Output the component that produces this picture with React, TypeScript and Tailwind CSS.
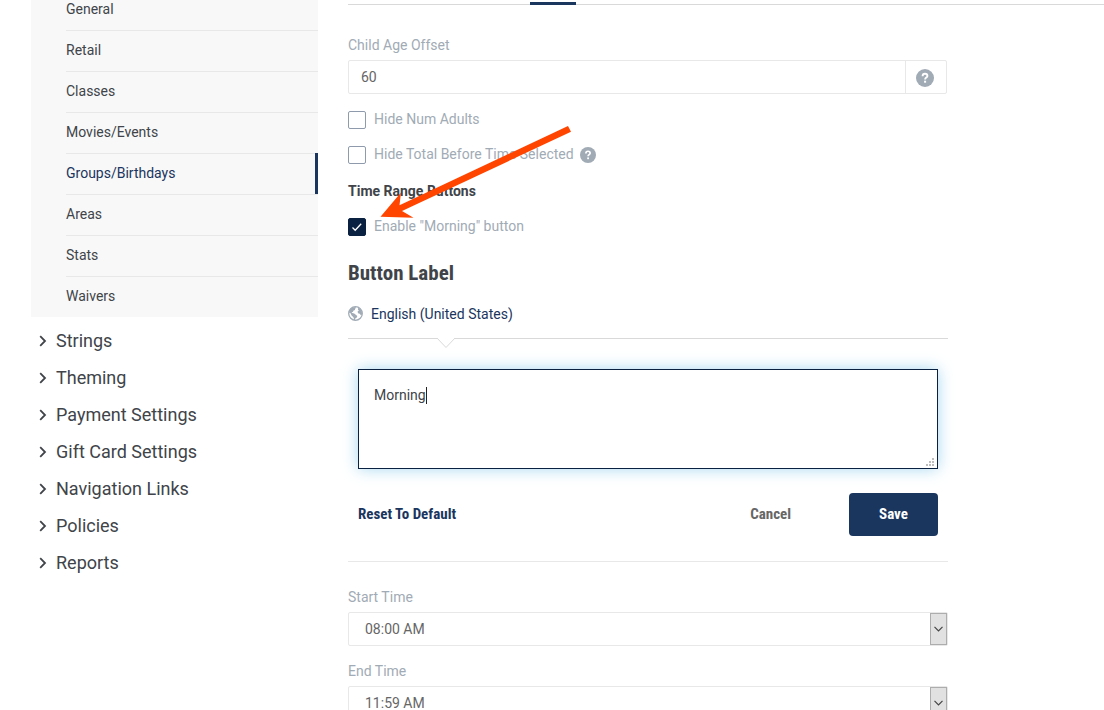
import { useState } from 'react';
import type { ReactNode } from 'react';

const subLinks = [
  'General',
  'Retail',
  'Classes',
  'Movies/Events',
  'Groups/Birthdays',
  'Areas',
  'Stats',
  'Waivers',
];

const sections = [
  'Strings',
  'Theming',
  'Payment Settings',
  'Gift Card Settings',
  'Navigation Links',
  'Policies',
  'Reports',
];

function HelpIcon({ className }: { className: string }) {
  return (
    <svg viewBox="0 0 18 18" className={className} aria-hidden="true">
      <circle cx="9" cy="9" r="9" fill="#a1abb5" />
      <path
        d="M6.6 7.2C6.6 5.6 7.6 4.8 9 4.8s2.4.8 2.4 2.1c0 1.7-2.3 1.7-2.3 3.5"
        fill="none"
        stroke="#fff"
        strokeWidth="1.9"
      />
      <rect x="8.1" y="11.7" width="2" height="2" fill="#fff" />
    </svg>
  );
}

function GlobeIcon() {
  return (
    <svg viewBox="0 0 15 15" className="size-[15px] shrink-0" aria-hidden="true">
      <circle cx="7.5" cy="7.5" r="6.8" fill="#fff" stroke="#a1abb5" strokeWidth="1.3" />
      <path
        d="M1.6 4 4.2 1.4 7.4 1l.8 1-1.3.8.2 1.3-1.5.3-.7 1.5-1.3.2.7 1 1.9.3 3.1 2.5-.5 1.5-1.4.9-.3 2-1-.4-.5-2.5L3.4 9.2 2.8 7.4 1 6.4z"
        fill="#a1abb5"
      />
      <path d="m10 1.8 2.4 1.5 1.5 2.8.1 2.3-1.1.8-1.2-1.4-1.7-.5-.4-1.7 1.3-1-.9-.9z" fill="#a1abb5" />
    </svg>
  );
}

interface CheckFieldProps {
  id: string;
  label: string;
  defaultChecked?: boolean;
  children?: ReactNode;
}

function CheckField({ id, label, defaultChecked, children }: CheckFieldProps) {
  return (
    <div className="flex h-[18px] items-center">
      <span className="relative size-[18px] shrink-0">
        <input
          id={id}
          type="checkbox"
          defaultChecked={defaultChecked}
          className="peer block size-[18px] appearance-none rounded-xs border border-[#8f9bad] bg-white checked:border-[#0b2142] checked:bg-[#0b2142]"
        />
        <svg
          viewBox="0 0 18 18"
          className="pointer-events-none absolute inset-0 hidden size-[18px] peer-checked:block"
          aria-hidden="true"
        >
          <path d="m4.5 9.5 2.7 2.7 6-6.4" fill="none" stroke="#fff" strokeWidth="1.3" />
        </svg>
      </span>
      <label htmlFor={id} className="ml-2 pb-0.5 text-sm text-[#a1abb5]">
        {label}
      </label>
      {children}
    </div>
  );
}

function TimeSelect({ id, label, value }: { id: string; label: string; value: string }) {
  return (
    <div>
      <label htmlFor={id} className="block text-sm text-[#a1abb5]">
        {label}
      </label>
      <div className="relative mt-[5px]">
        <select
          id={id}
          defaultValue={value}
          className="block h-[34px] w-full appearance-none rounded-xs border border-[#e8e8e8] bg-white px-4 text-sm text-[#666]"
        >
          <option>{value}</option>
        </select>
        <span className="pointer-events-none absolute inset-y-px right-px flex w-[17px] items-center justify-center border border-[#adadad] bg-[#e1e1e1]">
          <svg viewBox="0 0 9 6" className="h-1.5 w-[9px]" aria-hidden="true">
            <path d="M.5.8 4.5 4.8l4-4" fill="none" stroke="#444" strokeWidth="1.2" />
          </svg>
        </span>
      </div>
    </div>
  );
}

function Sidebar() {
  const [active, setActive] = useState('Groups/Birthdays');

  return (
    <nav className="-mt-2.5 ml-[31px] w-[287px] shrink-0 text-[#404449]">
      <ul className="bg-[#f8f8f8] pl-[35px]">
        {subLinks.map((label) => {
          const isActive = label === active;
          return (
            <li key={label} className="relative border-b border-[#e8e8e8] last:border-b-0">
              <a
                href="#"
                onClick={() => setActive(label)}
                className={`flex h-10 items-center pb-0.5 text-sm ${isActive ? 'text-[#1a355e]' : ''}`}
              >
                {label}
              </a>
              {isActive && <span className="absolute -top-px right-0 bottom-0 w-[3px] bg-[#1a355e]" />}
            </li>
          );
        })}
      </ul>

      <ul className="pt-[5px]">
        {sections.map((label) => (
          <li key={label}>
            <button type="button" className="flex h-[37px] w-full items-center pl-2 text-lg">
              <svg viewBox="0 0 8 12" className="h-3 w-2" aria-hidden="true">
                <path d="m1.2 1.2 4.8 4.8-4.8 4.8" fill="none" stroke="#404449" strokeWidth="1.8" />
              </svg>
              <span className="ml-[9px]">{label}</span>
            </button>
          </li>
        ))}
      </ul>
    </nav>
  );
}

function LabelEditor() {
  const [text, setText] = useState('Morning');

  return (
    <section>
      <h2 className="mt-[23px] font-['Roboto_Condensed',Roboto,sans-serif] text-[21px] leading-7 font-bold text-[#404449]">
        Button Label
      </h2>
      <div className="relative mt-1 flex h-12 items-center gap-2 border-b border-[#d9d9d9] pb-0.5 text-sm text-[#1a355e]">
        <GlobeIcon />
        <span>English (United States)</span>
        {/* Pointer under the active language */}
        <svg viewBox="0 0 20 12" className="absolute top-full left-[88px] h-3 w-5" aria-hidden="true">
          <path d="M0-1 10 9.5 20-1" fill="#fff" stroke="#d9d9d9" />
          <path d="M1-.5h18" stroke="#fff" />
        </svg>
      </div>
      <div className="px-2.5 pt-[30px]">
        <div className="relative">
          <textarea
            aria-label="Button Label"
            value={text}
            onChange={(e) => setText(e.target.value)}
            className="block h-[100px] w-full resize-none border border-[#0b2142] bg-white px-[15px] py-[15px] text-sm text-[#404449] shadow-[0_0_15px_#a8d8f0] outline-none"
          />
          <span className="pointer-events-none absolute top-[18px] left-[68px] h-[17px] w-px bg-[#222]" />
          <svg viewBox="0 0 8 8" className="absolute right-1 bottom-[3px] size-2" fill="#bdbdbd" aria-hidden="true">
            <path d="M6 0h2v2H6zM3 3h2v2H3zM6 3h2v2H6zM0 6h2v2H0zM3 6h2v2H3zM6 6h2v2H6z" />
          </svg>
        </div>
        <div className="mt-6 flex h-[43px] items-center font-['Roboto_Condensed',Roboto,sans-serif] text-[15px] font-bold">
          <button type="button" className="text-[#1a355e]">
            Reset To Default
          </button>
          <button type="button" className="ml-auto text-[#666]">
            Cancel
          </button>
          <button type="button" className="ml-[58px] h-full w-[89px] rounded bg-[#1a355e] text-white">
            Save
          </button>
        </div>
      </div>
    </section>
  );
}

export default function App() {
  return (
    <div className="relative flex h-screen overflow-hidden bg-white font-[Roboto,sans-serif]">
      <Sidebar />

      <main className="ml-[30px] min-w-0 flex-1">
        <div className="flex h-[5px] items-end border-b border-[#d9d9d9]">
          <span className="-mb-px ml-[182px] h-[3px] w-[46px] bg-[#1a355e]" />
        </div>

        <form className="mt-[30px] w-full max-w-[600px]" onSubmit={(e) => e.preventDefault()}>
          <label htmlFor="age-offset" className="block text-sm text-[#a1abb5]">
            Child Age Offset
          </label>
          <div className="mt-[5px] mr-px flex h-[34px] rounded-xs border border-[#e8e8e8]">
            <input
              id="age-offset"
              type="text"
              defaultValue="60"
              className="min-w-0 flex-1 px-3 text-sm text-[#666] outline-none"
            />
            <span className="flex w-[41px] items-center border-l border-[#e8e8e8] pt-0.5 pl-2.5">
              <HelpIcon className="size-[18px]" />
            </span>
          </div>

          <div className="mt-[17px] flex flex-col gap-[17px]">
            <CheckField id="hide-adults" label="Hide Num Adults" />
            <CheckField id="hide-total" label="Hide Total Before Time Selected">
              <HelpIcon className="ml-1.5 size-4" />
            </CheckField>
          </div>

          <h3 className="mt-[17px] text-sm font-bold text-[#404449]">Time Range Buttons</h3>
          <div className="mt-[17px]">
            <CheckField id="enable-morning" label={'Enable "Morning" button'} defaultChecked />
          </div>

          <LabelEditor />

          <div className="mt-[25px] flex flex-col gap-[15px] border-t border-[#e8e8e8] pt-[25px]">
            <TimeSelect id="start-time" label="Start Time" value="08:00 AM" />
            <TimeSelect id="end-time" label="End Time" value="11:59 AM" />
          </div>
        </form>
      </main>

      {/* Callout arrow aimed at the enable checkbox */}
      <svg
        viewBox="0 0 192 94"
        className="pointer-events-none absolute top-[125px] left-[380px] h-[94px] w-48"
        aria-hidden="true"
      >
        <path d="M188 1 191 6.8 22 86 33.5 92.8.5 91.8 21 67.5 19.5 80.3z" fill="#ff4500" />
      </svg>
    </div>
  );
}
